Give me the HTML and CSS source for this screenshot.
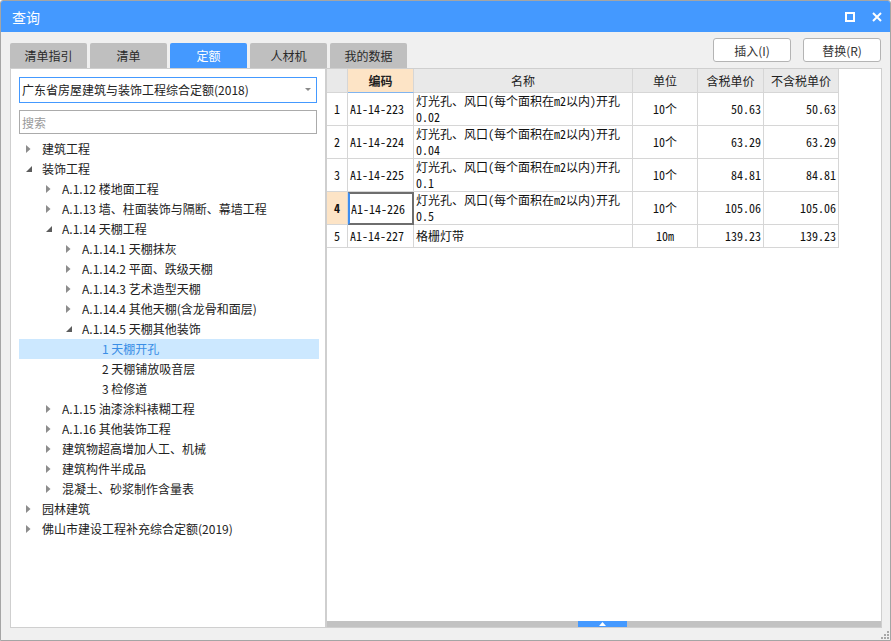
FILE: index.html
```html
<!DOCTYPE html>
<html lang="zh-CN">
<head>
<meta charset="utf-8">
<title>查询</title>
<link rel="stylesheet" href="styles.css">
</head>
<body>
<div class="window">
  <div class="titlebar">
    <span class="title">查询</span>
    <div class="win-ctrls">
      <svg class="ic-max" width="10" height="10" viewBox="0 0 10 10"><rect x="1" y="1" width="8" height="8" fill="none" stroke="#fff" stroke-width="2"/></svg>
      <svg class="ic-close" width="10" height="10" viewBox="0 0 10 10"><path d="M1 1 L9 9 M9 1 L1 9" stroke="#fff" stroke-width="2"/></svg>
    </div>
  </div>

  <div class="toolbar">
    <div class="tabs">
      <div class="tab">清单指引</div>
      <div class="tab">清单</div>
      <div class="tab active">定额</div>
      <div class="tab">人材机</div>
      <div class="tab">我的数据</div>
    </div>
    <div class="actions">
      <button class="btn">插入(I)</button>
      <button class="btn">替换(R)</button>
    </div>
  </div>

  <div class="main">
    <div class="left">
      <div class="select">
        <span class="select-text">广东省房屋建筑与装饰工程综合定额(2018)</span>
        <svg class="select-arrow" width="6" height="4" viewBox="0 0 6 4"><path d="M0 0 H6 L3 3 Z" fill="#8a8a8a"/></svg>
      </div>
      <div class="search">搜索</div>
      <ul class="tree">
        <li class="node lv0"><span class="tw"><svg width="5" height="8" viewBox="0 0 5 8"><path d="M0 0 L4.5 4 L0 8 Z" fill="#8c8c8c"/></svg></span>建筑工程</li>
        <li class="node lv0"><span class="tw"><svg width="6" height="6" viewBox="0 0 6 6"><path d="M6 0 V6 H0 Z" fill="#5c5c5c"/></svg></span>装饰工程</li>
        <li class="node lv1"><span class="tw"><svg width="5" height="8" viewBox="0 0 5 8"><path d="M0 0 L4.5 4 L0 8 Z" fill="#8c8c8c"/></svg></span>A.1.12 楼地面工程</li>
        <li class="node lv1"><span class="tw"><svg width="5" height="8" viewBox="0 0 5 8"><path d="M0 0 L4.5 4 L0 8 Z" fill="#8c8c8c"/></svg></span>A.1.13 墙、柱面装饰与隔断、幕墙工程</li>
        <li class="node lv1"><span class="tw"><svg width="6" height="6" viewBox="0 0 6 6"><path d="M6 0 V6 H0 Z" fill="#5c5c5c"/></svg></span>A.1.14 天棚工程</li>
        <li class="node lv2"><span class="tw"><svg width="5" height="8" viewBox="0 0 5 8"><path d="M0 0 L4.5 4 L0 8 Z" fill="#8c8c8c"/></svg></span>A.1.14.1 天棚抹灰</li>
        <li class="node lv2"><span class="tw"><svg width="5" height="8" viewBox="0 0 5 8"><path d="M0 0 L4.5 4 L0 8 Z" fill="#8c8c8c"/></svg></span>A.1.14.2 平面、跌级天棚</li>
        <li class="node lv2"><span class="tw"><svg width="5" height="8" viewBox="0 0 5 8"><path d="M0 0 L4.5 4 L0 8 Z" fill="#8c8c8c"/></svg></span>A.1.14.3 艺术造型天棚</li>
        <li class="node lv2"><span class="tw"><svg width="5" height="8" viewBox="0 0 5 8"><path d="M0 0 L4.5 4 L0 8 Z" fill="#8c8c8c"/></svg></span>A.1.14.4 其他天棚(含龙骨和面层)</li>
        <li class="node lv2"><span class="tw"><svg width="6" height="6" viewBox="0 0 6 6"><path d="M6 0 V6 H0 Z" fill="#5c5c5c"/></svg></span>A.1.14.5 天棚其他装饰</li>
        <li class="node lv3 selected"><span class="tw"></span>1 天棚开孔</li>
        <li class="node lv3"><span class="tw"></span>2 天棚铺放吸音层</li>
        <li class="node lv3"><span class="tw"></span>3 检修道</li>
        <li class="node lv1"><span class="tw"><svg width="5" height="8" viewBox="0 0 5 8"><path d="M0 0 L4.5 4 L0 8 Z" fill="#8c8c8c"/></svg></span>A.1.15 油漆涂料裱糊工程</li>
        <li class="node lv1"><span class="tw"><svg width="5" height="8" viewBox="0 0 5 8"><path d="M0 0 L4.5 4 L0 8 Z" fill="#8c8c8c"/></svg></span>A.1.16 其他装饰工程</li>
        <li class="node lv1"><span class="tw"><svg width="5" height="8" viewBox="0 0 5 8"><path d="M0 0 L4.5 4 L0 8 Z" fill="#8c8c8c"/></svg></span>建筑物超高增加人工、机械</li>
        <li class="node lv1"><span class="tw"><svg width="5" height="8" viewBox="0 0 5 8"><path d="M0 0 L4.5 4 L0 8 Z" fill="#8c8c8c"/></svg></span>建筑构件半成品</li>
        <li class="node lv1"><span class="tw"><svg width="5" height="8" viewBox="0 0 5 8"><path d="M0 0 L4.5 4 L0 8 Z" fill="#8c8c8c"/></svg></span>混凝土、砂浆制作含量表</li>
        <li class="node lv0"><span class="tw"><svg width="5" height="8" viewBox="0 0 5 8"><path d="M0 0 L4.5 4 L0 8 Z" fill="#8c8c8c"/></svg></span>园林建筑</li>
        <li class="node lv0"><span class="tw"><svg width="5" height="8" viewBox="0 0 5 8"><path d="M0 0 L4.5 4 L0 8 Z" fill="#8c8c8c"/></svg></span>佛山市建设工程补充综合定额(2019)</li>
      </ul>
    </div>

    <div class="right">
      <div class="grid">
        <div class="hd rn"></div>
        <div class="hd code-h">编码</div>
        <div class="hd">名称</div>
        <div class="hd">单位</div>
        <div class="hd">含税单价</div>
        <div class="hd">不含税单价</div>

        <div class="c rn">1</div>
        <div class="c code">A1-14-223</div>
        <div class="c name">灯光孔、风口(每个面积在m2以内)开孔<br>0.02</div>
        <div class="c unit">10个</div>
        <div class="c num">50.63</div>
        <div class="c num">50.63</div>

        <div class="c rn">2</div>
        <div class="c code">A1-14-224</div>
        <div class="c name">灯光孔、风口(每个面积在m2以内)开孔<br>0.04</div>
        <div class="c unit">10个</div>
        <div class="c num">63.29</div>
        <div class="c num">63.29</div>

        <div class="c rn">3</div>
        <div class="c code">A1-14-225</div>
        <div class="c name">灯光孔、风口(每个面积在m2以内)开孔<br>0.1</div>
        <div class="c unit">10个</div>
        <div class="c num">84.81</div>
        <div class="c num">84.81</div>

        <div class="c rn cur-rn">4</div>
        <div class="c code cur">A1-14-226</div>
        <div class="c name">灯光孔、风口(每个面积在m2以内)开孔<br>0.5</div>
        <div class="c unit">10个</div>
        <div class="c num">105.06</div>
        <div class="c num">105.06</div>

        <div class="c rn short">5</div>
        <div class="c code short">A1-14-227</div>
        <div class="c name short">格栅灯带</div>
        <div class="c unit short">10m</div>
        <div class="c num short">139.23</div>
        <div class="c num short">139.23</div>
      </div>
      <div class="hscroll">
        <div class="thumb"><svg width="7" height="4" viewBox="0 0 7 4"><path d="M3.5 0 L7 4 H0 Z" fill="#fff"/></svg></div>
      </div>
    </div>
  </div>

  <div class="statusbar">
    <svg class="grip" width="8" height="8" viewBox="0 0 8 8" fill="#a8a8a8">
      <rect x="6" y="0" width="2" height="2"/>
      <rect x="3" y="3" width="2" height="2"/><rect x="6" y="3" width="2" height="2"/>
      <rect x="0" y="6" width="2" height="2"/><rect x="3" y="6" width="2" height="2"/><rect x="6" y="6" width="2" height="2"/>
    </svg>
  </div>
</div>
</body>
</html>
```

FILE: styles.css
```css
* { box-sizing: border-box; }

body {
  margin: 0;
  background: #ffffff;
  font-family: "Noto Sans CJK SC", "Noto Sans", sans-serif;
  font-size: 12px;
  color: #222;
}

.window {
  width: 891px;
  height: 641px;
  border: 1px solid #a5a5a5;
  border-radius: 3px 3px 0 0;
  background: #f0f0f0;
  display: flex;
  flex-direction: column;
  overflow: hidden;
}

/* title bar */
.titlebar {
  height: 31px;
  flex: none;
  background: #4499ff;
  color: #fff;
  display: flex;
  align-items: center;
  padding: 0 8px 0 11px;
  font-size: 14px;
}
.title { flex: 1; line-height: 16px; }
.win-ctrls { display: flex; align-items: center; gap: 17px; }
.win-ctrls svg { display: block; }

/* toolbar with tabs */
.toolbar {
  height: 36px;
  flex: none;
  display: flex;
  justify-content: space-between;
  padding: 0 9px;
}
.tabs { display: flex; gap: 3px; align-self: flex-end; }
.tab {
  width: 77px;
  height: 25px;
  background: #bfbfbf;
  border-radius: 2px 2px 0 0;
  display: flex;
  align-items: center;
  justify-content: center;
  font-size: 12px;
  color: #2a2a2a;
}
.tab.active { background: #4499ff; color: #fff; }

.actions { display: flex; gap: 12px; padding-top: 6px; }
.btn {
  width: 78px;
  height: 24px;
  background: #fff;
  border: 1px solid #b4b4b4;
  border-radius: 3px;
  font-family: "Noto Sans CJK SC", sans-serif;
  font-size: 12px;
  color: #333;
  padding: 0;
}

/* main */
.main {
  height: 560px;
  flex: none;
  display: flex;
  padding-left: 9px;
}

.left {
  width: 316px;
  background: #fff;
  border: 1px solid #cfcfcf;
  padding: 8px 0 0 8px;
  display: flex;
  flex-direction: column;
}
.select {
  width: 298px;
  height: 26px;
  border: 1px solid #4499ff;
  display: flex;
  align-items: center;
  padding: 0 5px 0 2px;
  color: #222;
}
.select-text { flex: 1; line-height: 16px; }
.select-arrow { display: block; }

.search {
  width: 298px;
  height: 24px;
  margin-top: 7px;
  border: 1px solid #ababab;
  color: #9a9a9a;
  display: flex;
  align-items: center;
  padding-left: 2px;
}

.tree {
  list-style: none;
  margin: 5px 0 0 0;
  padding: 0;
  width: 300px;
}
.node {
  height: 20px;
  display: flex;
  align-items: center;
  color: #222;
  white-space: nowrap;
  line-height: 16px;
}
.lv0 { padding-left: 7px; }
.lv1 { padding-left: 27px; }
.lv2 { padding-left: 47px; }
.lv3 { padding-left: 67px; }
.tw {
  width: 16px;
  flex: none;
  display: flex;
  align-items: center;
}
.tw svg { display: block; }
.node.selected { background: #cce8ff; color: #3a8ee6; }

/* right grid */
.right {
  width: 556px;
  background: #fff;
  border: 1px solid #cfcfcf;
  display: flex;
  flex-direction: column;
  justify-content: space-between;
}
.grid {
  display: grid;
  grid-template-columns: 21px 66px 219px 65px 66px 75px;
  grid-template-rows: 24px 33px 33px 33px 33px 23px;
  width: 512px;
  font-family: "Noto Sans Mono CJK SC", "Noto Sans CJK SC", monospace;
  font-size: 12px;
  color: #111;
}
.hd, .c {
  border-right: 1px solid #d6d6d6;
  border-bottom: 1px solid #d6d6d6;
  display: flex;
  align-items: center;
  overflow: hidden;
  white-space: nowrap;
  line-height: 16px;
}
.hd {
  background: #e9e9e9;
  justify-content: center;
  color: #222;
}
.hd.code-h {
  background: #fde4c6;
  font-weight: bold;
  border-bottom-color: #7fb4f0;
}
.c.rn { justify-content: center; background: #fff; }
.c.code { padding-left: 2px; }
.c.name { padding-left: 2px; line-height: 16px; white-space: normal; }
.c.unit { justify-content: center; }
.c.num { justify-content: flex-end; padding-right: 2px; }
.c.cur-rn { background: #fde4c6; font-weight: bold; }
.c.cur {
  border: 2px solid #6e6e6e;
  border-left-color: #3e8ef0;
  padding-left: 1px;
}

.hscroll {
  height: 6px;
  background: #c2c2c2;
  position: relative;
  flex: none;
}
.thumb {
  position: absolute;
  left: 251px;
  top: 0;
  width: 49px;
  height: 6px;
  background: #4499ff;
  display: flex;
  align-items: center;
  justify-content: center;
}
.thumb svg { display: block; }

/* status */
.statusbar {
  flex: 1;
  display: flex;
  justify-content: flex-end;
  align-items: flex-end;
  padding: 0 1px 1px 0;
}
.grip { display: block; }
```
